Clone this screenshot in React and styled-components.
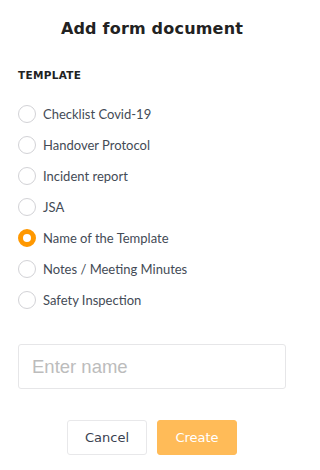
import React, { useState } from 'react'
import styled, { createGlobalStyle } from 'styled-components'

const GlobalStyle = createGlobalStyle`
  html, body {
    margin: 0;
    padding: 0;
    background: #ffffff;
  }
`

const TEMPLATES = [
  'Checklist Covid-19',
  'Handover Protocol',
  'Incident report',
  'JSA',
  'Name of the Template',
  'Notes / Meeting Minutes',
  'Safety Inspection',
]

const Dialog = styled.div`
  width: 304px;
  height: 470px;
  box-sizing: border-box;
  padding: 18px 18px 0 18px;
  display: flex;
  flex-direction: column;
  background: #ffffff;
`

const Title = styled.h2`
  margin: 0;
  font-family: 'DejaVu Sans', sans-serif;
  font-weight: bold;
  font-size: 16px;
  letter-spacing: 0.2px;
  line-height: 22px;
  color: #222222;
  text-align: center;
`

const SectionLabel = styled.div`
  margin-top: 29px;
  font-family: 'DejaVu Sans', sans-serif;
  font-weight: bold;
  font-size: 10.5px;
  letter-spacing: 0.3px;
  color: #222222;
`

const OptionList = styled.div`
  margin-top: 24px;
  display: flex;
  flex-direction: column;
  gap: 13px;
`

const Option = styled.label`
  display: flex;
  align-items: center;
  gap: 7px;
  height: 18px;
  cursor: pointer;
  font-family: 'Lato', sans-serif;
  font-size: 13px;
  color: #444b56;
`

const Radio = styled.span`
  width: 18px;
  height: 18px;
  box-sizing: border-box;
  border-radius: 50%;
  flex-shrink: 0;
  background: #ffffff;
  border: ${p => (p.$checked ? '5px solid #ff9800' : '1px solid #d2d2d6')};
`

const NameInput = styled.input`
  margin-top: 35px;
  height: 45px;
  box-sizing: border-box;
  width: 100%;
  border: 1px solid #e6e6e8;
  border-radius: 3px;
  padding: 0 13px;
  font-family: 'Liberation Sans', Arial, sans-serif;
  font-size: 18.5px;
  color: #333333;
  outline: none;
  &::placeholder {
    color: #bcbcbc;
  }
`

const Actions = styled.div`
  margin-top: 31px;
  display: flex;
  justify-content: center;
  gap: 10px;
`

const Button = styled.button`
  width: 80px;
  height: 35px;
  box-sizing: border-box;
  border-radius: 3px;
  font-family: 'DejaVu Sans', sans-serif;
  font-size: 13px;
  font-weight: 400;
  cursor: pointer;
  border: 1px solid ${p => (p.$primary ? '#ffbb58' : '#e8e8ea')};
  background: ${p => (p.$primary ? '#ffbb58' : '#ffffff')};
  color: ${p => (p.$primary ? '#ffffff' : '#3a4150')};
`

export default function App() {
  const [selected, setSelected] = useState('Name of the Template')

  return (
    <>
      <GlobalStyle />
      <Dialog>
        <Title>Add form document</Title>
        <SectionLabel>TEMPLATE</SectionLabel>
        <OptionList>
          {TEMPLATES.map(name => (
            <Option key={name} onClick={() => setSelected(name)}>
              <Radio $checked={selected === name} />
              {name}
            </Option>
          ))}
        </OptionList>
        <NameInput placeholder="Enter name" />
        <Actions>
          <Button>Cancel</Button>
          <Button $primary>Create</Button>
        </Actions>
      </Dialog>
    </>
  )
}
